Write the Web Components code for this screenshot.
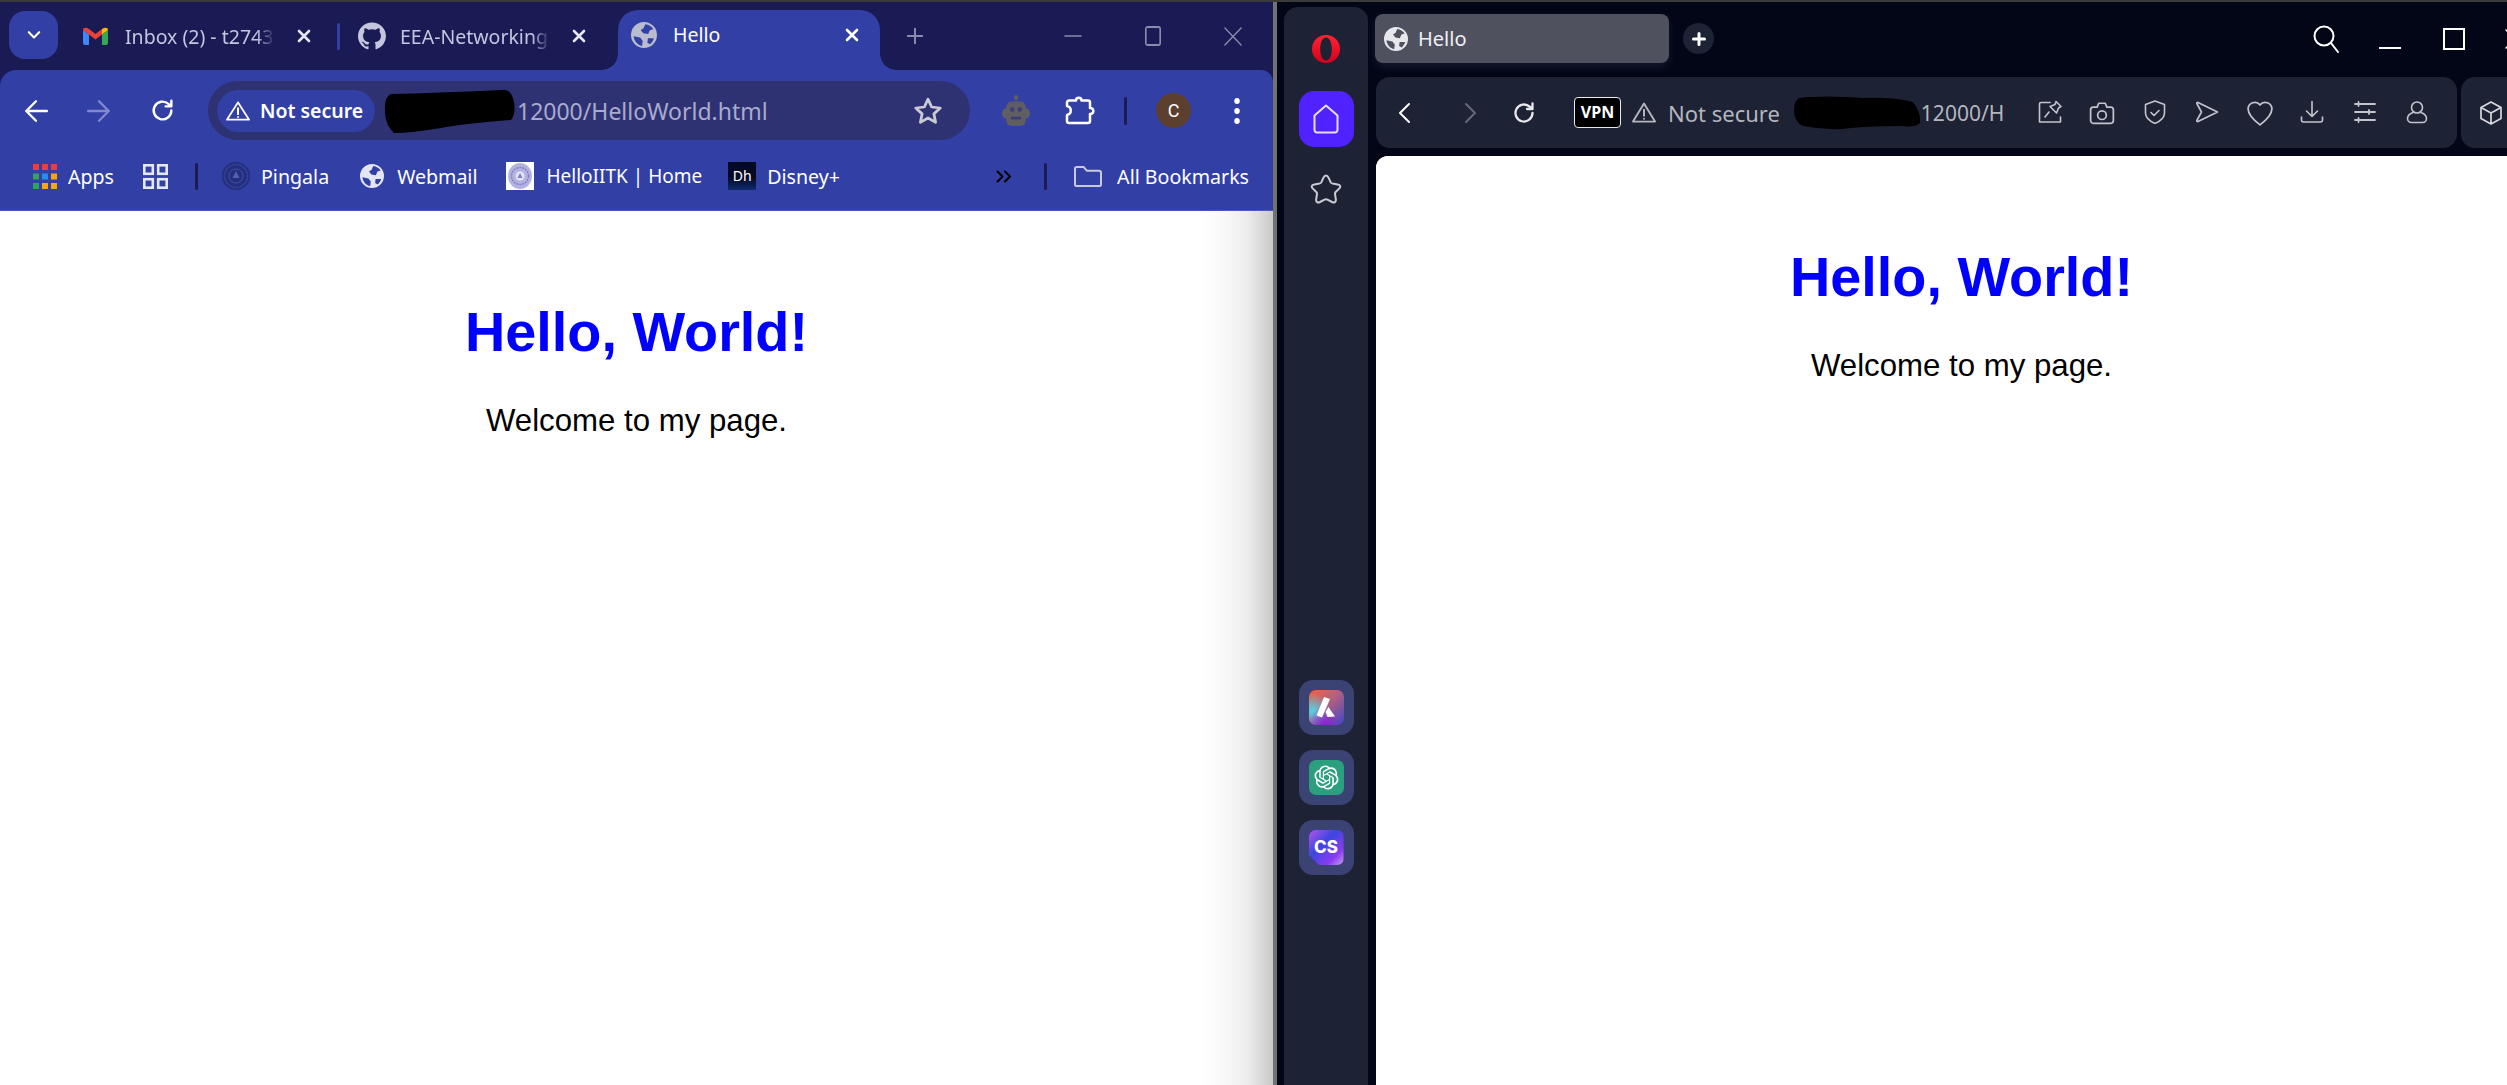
<!DOCTYPE html>
<html>
<head>
<meta charset="utf-8">
<title>Hello</title>
<style>
  html, body { margin: 0; height: 100%; overflow: hidden; background: #3a3a3a; }
  body { display: flex; flex-direction: column; padding-top: 2px; box-sizing: border-box; font-family: "Noto Sans", "Open Sans", sans-serif; }
  .desk { flex: 1; display: flex; min-height: 0; }
</style>
</head>
<body>
<div class="desk">
  <chrome-window></chrome-window>
  <opera-window></opera-window>
</div>
<script>
const S = 'fill="none" stroke="currentColor" stroke-linecap="round" stroke-linejoin="round"';
const ICONS = {
  chevron: ['0 0 20 20', `<path ${S} stroke-width="2.600" d="M3.500 6.500l6.500 6.500 6.500-6.500"/>`],
  gmail: ['0 0 25 18', `<path fill="#4285f4" d="M0 3v13a2 2 0 0 0 2 2h4V7.500L0 3z"/><path fill="#34a853" d="M19 18h4a2 2 0 0 0 2-2V3l-6 4.500V18z"/><path fill="#ea4335" d="M6 7.500l6.500 5 6.500-5V2l-6.500 5L6 2C3 0 0 .5 0 3l6 4.500z"/><path fill="#fbbc04" d="M19 2v5.500L25 3c0-2.500-3-3-6-1z"/>`],
  github: ['0 0 24 24.500', `<path fill="currentColor" d="M12 .5C5.37.5 0 5.87 0 12.5c0 5.3 3.44 9.8 8.2 11.39.6.11.82-.26.82-.58v-2.03c-3.34.73-4.04-1.61-4.04-1.61-.55-1.39-1.33-1.76-1.33-1.76-1.09-.74.08-.73.08-.73 1.2.08 1.84 1.24 1.84 1.24 1.07 1.83 2.81 1.3 3.49 1 .11-.78.42-1.31.76-1.61-2.67-.3-5.47-1.33-5.47-5.93 0-1.31.47-2.38 1.24-3.22-.13-.3-.54-1.52.12-3.18 0 0 1-.32 3.3 1.23a11.5 11.5 0 0 1 6 0c2.29-1.55 3.3-1.23 3.3-1.23.66 1.66.25 2.88.12 3.18.77.84 1.23 1.91 1.23 3.22 0 4.61-2.8 5.63-5.48 5.92.43.37.81 1.1.81 2.22v3.29c0 .32.22.7.83.58A12 12 0 0 0 24 12.500C24 5.87 18.63.5 12 .5z"/>`],
  globe: ['2 2 20 20', `<path fill="currentColor" fill-rule="evenodd" d="M12 2a10 10 0 1 0 0 20 10 10 0 1 0 0-20zM13 3.700c2.600.3 4.800 1.700 6.200 3.800l-2.700.8-1.300 3-3.700-.6-2-2.400 2.200-1.600zM4 13l5 1 2 2.500-.5 3.900C7 19.800 4.500 16.800 4 13zM15 14.500h4.600c-.5 1.900-1.600 3.500-3 4.600l-2-1.200z"/>`],
  close: ['0 0 16 16', `<path ${S} stroke-width="2.600" d="M3 3l10 10M13 3L3 13"/>`],
  plus: ['0 0 20 20', `<path ${S} stroke-width="2.200" d="M10 2v16M2 10h16"/>`],
  oplus: ['0 0 14 14', `<path ${S} stroke-width="3" d="M7 1.500v11M1.500 7h11"/>`],
  min: ['0 0 20 20', `<path ${S} stroke-width="1.500" d="M1 10h18"/>`],
  max: ['0 0 20 20', `<rect ${S} stroke-width="1.800" x="2" y="1" width="16" height="18" rx="2"/>`],
  x: ['0 0 20 20', `<path ${S} stroke-width="1.500" d="M1 1l18 18M19 1L1 19"/>`],
  back: ['0 0 24 24', `<path ${S} stroke-width="2.200" d="M22 12H3M12 3l-9 9 9 9"/>`],
  forward: ['0 0 24 24', `<path ${S} stroke-width="2.200" d="M2 12h19M12 3l9 9-9 9"/>`],
  reload: ['0 0 24 24', `<path ${S} stroke-width="2.300" d="M20.500 12a8.500 8.500 0 1 1-2.800-6.300L20.500 8M20.500 2.500V8H15"/>`],
  warn: ['0 0 24 22', `<path ${S} stroke-width="1.900" d="M12 1.500L23 20.500H1L12 1.500z"/><path ${S} stroke-width="2" d="M12 8v6.500M12 17.500v.1"/>`],
  star: ['0 0 24 24', `<path ${S} stroke-width="2.200" d="M12 2.500l2.900 6.300 6.900.8-5.100 4.700 1.400 6.800-6.100-3.500-6.100 3.500 1.400-6.800L2.200 9.600l6.900-.8z"/>`],
  robot: ['0 0 32 34', `<path fill="currentColor" d="M15 0h2v6h-2z"/><circle cx="16" cy="3" r="2.500" fill="currentColor"/><rect x="5" y="7" width="22" height="26" rx="6" fill="currentColor"/><rect x="0" y="14" width="32" height="11" rx="5" fill="currentColor"/><rect x="9.500" y="13" width="4.500" height="4.500" rx="1" fill="#3a3d78"/><rect x="18" y="13" width="4.500" height="4.500" rx="1" fill="#3a3d78"/><rect x="10" y="23" width="12" height="3" rx="1.500" fill="#3a3d78"/>`],
  puzzle: ['0 0 30 29', `<path ${S} stroke-width="2.500" d="M5 4.500h6C11 .8 16.500.8 16.500 4.500H23a2 2 0 0 1 2 2V12c4.500-.5 4.500 6.500 0 6v7a2 2 0 0 1-2 2H4a2 2 0 0 1-2-2v-6c5-1 5-8 0-9V6.500a2 2 0 0 1 2-2z"/>`],
  kebab: ['0 0 24 26', `<circle cx="12" cy="3" r="3" fill="currentColor"/><circle cx="12" cy="13" r="3" fill="currentColor"/><circle cx="12" cy="23" r="3" fill="currentColor"/>`],
  apps: ['0 0 24 25', [['#ea3d3d','#ea3d3d','#ea3d3d'],['#34a15c','#2a8ce8','#f5a712'],['#34a15c','#f5a712','#f5a712']].map((r, j) => r.map((c, i) => `<rect x="${i * 9}" y="${j * 9.500}" width="6" height="6" fill="${c}"/>`).join('')).join('')],
  grid: ['0 0 25 25', `<g fill="none" stroke="#e6e7f4" stroke-width="2.600"><rect x="1.300" y="1.300" width="8.500" height="8.500"/><rect x="15.200" y="1.300" width="8.500" height="8.500"/><rect x="1.300" y="15.200" width="8.500" height="8.500"/><rect x="15.200" y="15.200" width="8.500" height="8.500"/></g>`],
  seal: ['0 0 28 28', `<circle cx="14" cy="14" r="14" fill="#23307f"/><circle cx="14" cy="14" r="11.500" fill="none" stroke="#3e4aa0" stroke-width="1.500" stroke-dasharray="1.500 1"/><circle cx="14" cy="14" r="7" fill="none" stroke="#46529f" stroke-width="1"/><path fill="#5561ad" d="M14 9l3.500 7h-7z"/>`],
  sealwhite: ['0 0 28 28', `<rect width="28" height="28" fill="#fff"/><ellipse cx="14" cy="14" rx="12" ry="13" fill="#b3b3e2"/><circle cx="14" cy="14" r="8.500" fill="none" stroke="#8080c8" stroke-width="1.500" stroke-dasharray="2 1"/><circle cx="14" cy="14" r="4.500" fill="#e2e2f4"/><path fill="#8080c8" d="M14 11l2.500 5h-5z"/>`],
  folder: ['0 0 28 22', `<path fill="none" stroke="#c9cad6" stroke-width="2" stroke-linejoin="round" d="M1 3a2 2 0 0 1 2-2h6.500l3.500 4h12a2 2 0 0 1 2 2v12a2 2 0 0 1-2 2H3a2 2 0 0 1-2-2z"/>`],
  more: ['0 0 16 13', `<path ${S} stroke-width="2" d="M1.500 1.500l5 5-5 5M9 1.500l5 5-5 5"/>`],
  blobA: ['0 0 131 44', `<path d="M7 5Q50 4 118 1q9-2 12 12 2 12-3 18-50 4-70 8-30 5-47 5Q1 36 1 22 0 8 7 5z"/>`],
  blobB: ['0 0 128 34', `<path d="M6 2Q30-1 70 2q30-1 50 4 8 10 7 21-5 5-17 3-40 0-60 3-20 1-40-3Q1 26 1 14 1 5 6 2z"/>`],
  opera: ['0 0 28 28', `<defs><linearGradient id="og" x1="0" y1="0" x2="0" y2="1"><stop offset="0" stop-color="#ff2333"/><stop offset="1" stop-color="#d5001c"/></linearGradient></defs><path fill="url(#og)" fill-rule="evenodd" d="M14 0a14 14 0 1 0 0 28 14 14 0 1 0 0-28zm0 2.500c-3.500 0-5.800 5-5.800 11.500s2.300 11.500 5.800 11.500 5.800-5 5.800-11.500S17.500 2.500 14 2.500z"/>`],
  home: ['0 0 26 30', `<path ${S} stroke-width="2" d="M1.500 11.500L13 1.500l11.500 10V26a2.500 2.500 0 0 1-2.500 2.500H4A2.500 2.500 0 0 1 1.500 26z"/>`],
  ostar: ['0 0 32 30', `<path ${S} stroke-width="2" d="M16 1.500c1.500 0 2 1 2.800 2.600l1.900 4.300c.4.800 1 1 1.900 1.200l5 .8c3 .5 3.400 2.300 1.500 4.200l-3.400 3.400c-.6.600-.8 1.300-.7 2l.8 5.200c.4 3-1.400 4-3.800 2.800l-4.500-2.400c-1-.5-2-.5-3 0l-4.500 2.400c-2.400 1.200-4.200.2-3.800-2.800l.8-5.200c.1-.7-.1-1.400-.7-2l-3.400-3.400c-1.900-1.900-1.500-3.700 1.500-4.200l5-.8c.9-.2 1.500-.4 1.900-1.200l1.900-4.300C14 2.500 14.500 1.500 16 1.500z"/>`],
  left: ['0 0 20 24', `<path ${S} stroke-width="2" d="M14 3L5 12l9 9"/>`],
  right: ['0 0 20 24', `<path ${S} stroke-width="2" d="M6 3l9 9-9 9"/>`],
  note: ['0 0 24 24', `<path ${S} stroke-width="1.600" d="M12 2.500H3A1.500 1.500 0 0 0 1.500 4v18h21v-5"/><path ${S} stroke-width="1.600" d="M18 1.500l5 5-2.500 1.500-2 5-6.500-6.500 5-2zM11 12l-4 5"/>`],
  camera: ['0 0 24 24', `<path ${S} stroke-width="1.600" d="M1.500 9a2.500 2.500 0 0 1 2.500-2.500h3.500L9 3h6l1.500 3.500H20A2.500 2.500 0 0 1 22.500 9v10a2.500 2.500 0 0 1-2.500 2.500H4A2.500 2.500 0 0 1 1.500 19z"/><circle ${S} stroke-width="1.600" cx="12" cy="14" r="4"/>`],
  shield: ['0 0 24 24', `<path ${S} stroke-width="1.600" d="M12 1L21.500 4.500V13c0 5-4 8-9.500 10.500C6.500 21 2.500 18 2.500 13V4.500z"/><path ${S} stroke-width="1.600" d="M8 12.500l3 3 5-5"/>`],
  send: ['0 0 24 24', `<path ${S} stroke-width="1.600" d="M3 2.500c-.8-.3-1.500.3-1.200 1L6.500 12l-4.700 8.500c-.3.700.4 1.300 1.200 1L22.500 12z"/>`],
  heart: ['0 0 24 24', `<path ${S} stroke-width="1.600" d="M12 23C5 17.500 1 13 1 8a6.200 6.200 0 0 1 11-3.500A6.200 6.200 0 0 1 23 8c0 5-4 9.500-11 15z"/>`],
  download: ['0 0 24 24', `<path ${S} stroke-width="1.600" d="M12 1.500v15M6.500 11l5.500 5.500 5.500-5.500M1.500 17v3a2 2 0 0 0 2 2h17a2 2 0 0 0 2-2v-3"/>`],
  sliders: ['0 0 24 24', `<path ${S} stroke-width="1.800" d="M2 4h20M2 12h20M2 20h20M5.500 2v4M16 10v4M5.500 18v4"/>`],
  user: ['0 0 24 24', `<circle ${S} stroke-width="1.600" cx="12" cy="7.500" r="5.500"/><path ${S} stroke-width="1.600" d="M8 12.500C4 14 2.500 16.500 2.500 18.500a4 4 0 0 0 4 4h11a4 4 0 0 0 4-4c0-2-1.500-4.500-5.500-6"/>`],
  cube: ['0 0 24 24', `<path ${S} stroke-width="1.700" d="M12 1L22 6.500v11L12 23 2 17.500v-11zM2 6.500L12 12l10-5.500M12 12v11"/>`],
  search: ['0 0 26 28', `<circle ${S} stroke-width="2" cx="11" cy="11" r="9.500"/><path ${S} stroke-width="2" d="M18 18l7 9"/>`],
  omin: ['0 0 22 4', `<path fill="none" stroke="currentColor" stroke-width="2" d="M0 2h22"/>`],
  omax: ['0 0 22 22', `<rect x="1" y="1" width="20" height="20" fill="none" stroke="currentColor" stroke-width="2"/>`],
  aria: ['0 0 35 35', `<defs><linearGradient id="a1" x1="0" y1="0" x2="1" y2="1"><stop offset="0" stop-color="#f0663a"/><stop offset=".45" stop-color="#b8607c"/><stop offset="1" stop-color="#3d48c8"/></linearGradient><radialGradient id="a2" cx=".1" cy=".6" r=".5"><stop offset="0" stop-color="#52d4e8"/><stop offset="1" stop-color="#52d4e8" stop-opacity="0"/></radialGradient><radialGradient id="a3" cx=".45" cy="1" r=".5"><stop offset="0" stop-color="#8a1fd6"/><stop offset="1" stop-color="#8a1fd6" stop-opacity="0"/></radialGradient></defs><rect width="35" height="35" rx="7" fill="url(#a1)"/><rect width="35" height="35" rx="7" fill="url(#a2)"/><rect width="35" height="35" rx="7" fill="url(#a3)"/><path fill="#fff" d="M15 7l6 2-8 18.500-5.500-2zM19.500 17l6.500 9.500-7.500.5-2-5z"/>`],
  gpt: ['0 0 35 35', `<rect width="35" height="35" rx="7" fill="#2b9f7e"/><g transform="translate(5.500 5.500)"><path fill="#fff" d="M22.2819 9.8211a5.9847 5.9847 0 0 0-.5157-4.9108 6.0462 6.0462 0 0 0-6.5098-2.9A6.0651 6.0651 0 0 0 4.9807 4.1818a5.9847 5.9847 0 0 0-3.9977 2.9 6.0462 6.0462 0 0 0 .7427 7.0966 5.98 5.98 0 0 0 .511 4.9107 6.051 6.051 0 0 0 6.5146 2.9001A5.9847 5.9847 0 0 0 13.2599 24a6.0557 6.0557 0 0 0 5.7718-4.2058 5.9894 5.9894 0 0 0 3.9977-2.9001 6.0557 6.0557 0 0 0-.7475-7.0729zm-9.022 12.6081a4.4755 4.4755 0 0 1-2.8764-1.0408l.1419-.0804 4.7783-2.7582a.7948.7948 0 0 0 .3927-.6813v-6.7369l2.02 1.1686a.071.071 0 0 1 .038.052v5.5826a4.504 4.504 0 0 1-4.4945 4.4944zm-9.6607-4.1254a4.4708 4.4708 0 0 1-.5346-3.0137l.142.0852 4.783 2.7582a.7712.7712 0 0 0 .7806 0l5.8428-3.3685v2.3324a.0804.0804 0 0 1-.0332.0615L9.74 19.9502a4.4992 4.4992 0 0 1-6.1408-1.6464zM2.3408 7.8956a4.485 4.485 0 0 1 2.3655-1.9728V11.6a.7664.7664 0 0 0 .3879.6765l5.8144 3.3543-2.0201 1.1685a.0757.0757 0 0 1-.071 0l-4.8303-2.7865A4.504 4.504 0 0 1 2.3408 7.872zm16.5963 3.8558L13.1038 8.364 15.1192 7.2a.0757.0757 0 0 1 .071 0l4.8303 2.7913a4.4944 4.4944 0 0 1-.6765 8.1042v-5.6772a.79.79 0 0 0-.407-.667zm2.0107-3.0231l-.142-.0852-4.7735-2.7818a.7759.7759 0 0 0-.7854 0L9.409 9.2297V6.8974a.0662.0662 0 0 1 .0284-.0615l4.8303-2.7866a4.4992 4.4992 0 0 1 6.6802 4.66zM8.3065 12.863l-2.02-1.1638a.0804.0804 0 0 1-.038-.0567V6.0742a4.4992 4.4992 0 0 1 7.3757-3.4537l-.142.0805L8.704 5.459a.7948.7948 0 0 0-.3927.6813zm1.0976-2.3654l2.602-1.4998 2.6069 1.4998v2.9994l-2.5974 1.4997-2.6067-1.4997Z"/></g>`],
};

class AppIcon extends HTMLElement {
  connectedCallback() {
    if (this.shadowRoot) return;
    const [box, body] = ICONS[this.getAttribute('name')];
    const w = this.getAttribute('w');
    const h = this.getAttribute('h') || w;
    this.attachShadow({ mode: 'open' }).innerHTML = `
      <style>:host { display: block; flex: none; width: ${w}px; height: ${h}px; } svg { display: block; width: 100%; height: 100%; }</style>
      <svg viewBox="${box}" preserveAspectRatio="none">${body}</svg>`;
  }
}

class ChromeTab extends HTMLElement {
  constructor() {
    super();
    this.attachShadow({ mode: 'open' }).innerHTML = `
      <style>
        :host { display: flex; align-items: center; flex: none; height: 48px; color: #c4c6de; font-size: 19.500px; }
        :host([active]) { position: relative; width: 262px; height: 60px; box-sizing: border-box; padding: 0 16px 11px 13px; margin-top: auto; background: #323fa5; border-radius: 20px 20px 0 0; color: #fff; }
        :host([active])::before, :host([active])::after { content: ""; position: absolute; bottom: 0; width: 16px; height: 16px; }
        :host([active])::before { right: 100%; background: radial-gradient(circle at 0 0, transparent 15.500px, #323fa5 16px); }
        :host([active])::after { left: 100%; background: radial-gradient(circle at 100% 0, transparent 15.500px, #323fa5 16px); }
        .label { width: 150px; margin: 0 21px 0 var(--gap, 17px); overflow: hidden; white-space: nowrap; -webkit-mask-image: linear-gradient(to right, #000 88%, transparent); mask-image: linear-gradient(to right, #000 88%, transparent); }
        :host([active]) .label { -webkit-mask-image: none; mask-image: none; margin: 0 0 0 16px; }
        .close { margin-left: auto; color: #e6e7f2; }
        :host([active]) .close { color: #fff; }
      </style>
      <slot name="icon"></slot>
      <div class="label"><slot></slot></div>
      <app-icon class="close" name="close" w="16" style="margin-right:4px"></app-icon>`;
  }
}

class BookmarkItem extends HTMLElement {
  constructor() {
    super();
    this.attachShadow({ mode: 'open' }).innerHTML = `
      <style>
        :host { display: flex; align-items: center; flex: none; gap: 11px; color: #fff; font-size: 19.600px; white-space: nowrap; }
      </style>
      <slot name="icon"></slot>
      <slot></slot>`;
  }
}

class HelloPage extends HTMLElement {
  constructor() {
    super();
    this.attachShadow({ mode: 'open' }).innerHTML = `
      <style>
        :host { display: block; background: #fff; color: #000; text-align: center; font-family: "Liberation Sans", Arial, sans-serif; padding-top: 89px; }
        h1 { margin: 0 0 41px; font-size: 55.800px; line-height: 64px; font-weight: 700; color: #00f; }
        p { margin: 0; font-size: 31.200px; line-height: 32px; }
      </style>
      <h1>Hello, World!</h1>
      <p>Welcome to my page.</p>`;
  }
}

class ChromeWindow extends HTMLElement {
  constructor() {
    super();
    this.attachShadow({ mode: 'open' }).innerHTML = `
      <style>
        :host { display: flex; flex-direction: column; flex: none; width: 1273px; background: #1a1a55; }
        .strip { display: flex; align-items: center; height: 68px; padding-left: 9px; color: #fff; }
        .drop { display: grid; place-items: center; flex: none; width: 49px; height: 48px; margin: 0 0 2px; background: #323fa5; border-radius: 16px; color: #fff; }
        .sep { flex: none; width: 3px; border-radius: 2px; }
        .strip .sep { height: 27px; background: #323fa5; margin: 0 18px 0 21px; }
        .winbtn { display: grid; place-items: center; width: 80px; color: #8b8cab; }
        .tools { background: #323fa5; border-radius: 16px 12px 0 0; }
        .nav { display: flex; align-items: center; height: 59px; padding: 11px 0 2px 23px; color: #fff; }
        .pill { display: flex; align-items: center; flex: none; width: 762px; height: 59px; box-sizing: border-box; margin-left: 33.500px; padding-left: 9px; background: #2e3272; border-radius: 30px; color: #a9abcf; font-size: 23px; }
        .chip { display: flex; align-items: center; gap: 10px; width: 158px; height: 42px; box-sizing: border-box; padding-left: 9px; background: #323fa5; border-radius: 21px; color: #fff; font-size: 19.500px; font-weight: 600; white-space: nowrap; }
        .avatar { display: grid; place-items: center; flex: none; width: 35px; height: 35px; border-radius: 50%; background: #5d3f30; color: #fff; font: 18px Roboto, sans-serif; }
        .marks { display: flex; align-items: center; height: 68px; padding: 0 24px 0 33px; border-bottom: 1px solid #4c58c2; }
        .marks .sep { height: 27px; background: #1a1a55; }
        .disney { display: grid; place-items: center; width: 28px; height: 28px; background: linear-gradient(#050a24 55%, #0f2a6e); color: #fff; font-size: 14px; line-height: 28px; }
        .body { position: relative; flex: 1; background: #fff; }
        .body::after { content: ""; position: absolute; top: 0; right: 0; bottom: 0; width: 75px; background: linear-gradient(to right, rgba(0,0,0,0), rgba(0,0,0,.02) 30%, rgba(0,0,0,.07) 65%, rgba(0,0,0,.21)); }
      </style>
      <div class="strip">
        <div class="drop"><app-icon name="chevron" w="16"></app-icon></div>
        <chrome-tab style="margin-left:25px"><app-icon slot="icon" name="gmail" w="25" h="18"></app-icon>Inbox (2) - t2743</chrome-tab>
        <div class="sep"></div>
        <chrome-tab style="--gap:14px"><app-icon slot="icon" name="github" w="28"></app-icon>EEA-Networking</chrome-tab>
        <chrome-tab active style="margin-left:27px"><app-icon slot="icon" name="globe" w="26" style="color:#b9bbcf"></app-icon>Hello</chrome-tab>
        <app-icon name="plus" w="18" style="margin-left:26px;color:#8b8cab"></app-icon>
        <div style="display:flex;margin-left:auto">
          <div class="winbtn"><app-icon name="min" w="18"></app-icon></div>
          <div class="winbtn"><app-icon name="max" w="18" h="20"></app-icon></div>
          <div class="winbtn"><app-icon name="x" w="18" h="19"></app-icon></div>
        </div>
      </div>
      <div class="tools">
        <div class="nav">
          <app-icon name="back" w="26"></app-icon>
          <app-icon name="forward" w="26" style="margin-left:37px;color:#8089cc"></app-icon>
          <app-icon name="reload" w="25" style="margin-left:37.500px"></app-icon>
          <div class="pill">
            <div class="chip"><app-icon name="warn" w="24" h="20"></app-icon>Not secure</div>
            <app-icon name="blobA" w="131" h="44" style="margin-left:9px;color:#000"></app-icon>
            <span style="margin-left:2px">12000/HelloWorld.html</span>
            <app-icon name="star" w="30" style="margin:0 27px 0 auto;color:#c9cad6"></app-icon>
          </div>
          <app-icon name="robot" w="28" h="32" style="margin-left:32px;color:#5f5f63"></app-icon>
          <app-icon name="puzzle" w="30" h="29" style="margin-left:35px"></app-icon>
          <div class="sep" style="height:28px;background:#1a1a55;margin:0 29px"></div>
          <div class="avatar">C</div>
          <app-icon name="kebab" w="22" h="26" style="margin-left:35px"></app-icon>
        </div>
        <div class="marks">
          <bookmark-item><app-icon slot="icon" name="apps" w="24" h="25"></app-icon>Apps</bookmark-item>
          <app-icon name="grid" w="25" style="margin-left:29px"></app-icon>
          <div class="sep" style="margin:0 24px 0 27px"></div>
          <bookmark-item><app-icon slot="icon" name="seal" w="28"></app-icon>Pingala</bookmark-item>
          <bookmark-item style="margin-left:31px;gap:13px"><app-icon slot="icon" name="globe" w="24" style="color:#e4e5f2"></app-icon>Webmail</bookmark-item>
          <bookmark-item style="margin-left:29px;gap:12px;font-size:19px"><app-icon slot="icon" name="sealwhite" w="28"></app-icon>HelloIITK | Home</bookmark-item>
          <bookmark-item style="margin-left:26px"><div slot="icon" class="disney">Dh</div>Disney+</bookmark-item>
          <app-icon name="more" w="16" h="13" style="margin-left:auto"></app-icon>
          <div class="sep" style="margin:0 27px 0 32px"></div>
          <bookmark-item style="gap:15px"><app-icon slot="icon" name="folder" w="28" h="21"></app-icon>All Bookmarks</bookmark-item>
        </div>
      </div>
      <div class="body"><hello-page></hello-page></div>`;
  }
}

class OperaWindow extends HTMLElement {
  constructor() {
    super();
    this.attachShadow({ mode: 'open' }).innerHTML = `
      <style>
        :host { display: flex; flex: 1; min-width: 0; overflow: hidden; background: #020617; border-left: 4px solid #727272; padding-left: 7px; }
        .side { display: flex; flex-direction: column; align-items: center; flex: none; width: 84px; box-sizing: border-box; margin-top: 5px; padding: 28px 0 210px; background: #1e2235; border-radius: 14px 14px 0 0; color: #c9cbd4; }
        .home { display: grid; place-items: center; flex: none; width: 55px; height: 56px; margin: 28px 0 27px; background: #4f22ff; border-radius: 15px; color: #e6e0ff; }
        .app { display: grid; place-items: center; flex: none; width: 55px; height: 55px; margin-top: 15px; background: #3a4373; border-radius: 14px; }
        .cs { position: relative; width: 35px; height: 35px; border-radius: 7px 7px 7px 12px; background: linear-gradient(135deg, #b455e8, #3c45e0 40%, #8a3cf0 75%, #c8a0f4); color: #fff; font: 800 17px/35px Inter, sans-serif; text-align: center; clip-path: polygon(0 0, 100% 0, 100% 100%, 30% 100%, 0 70%); }
        .main { display: flex; flex-direction: column; flex: none; width: 1172px; margin-left: 7px; }
        .top { display: flex; align-items: center; flex: none; height: 49px; margin-top: 12px; color: #fff; }
        .tab { display: flex; align-items: center; flex: none; gap: 10px; width: 294px; height: 49px; box-sizing: border-box; padding-left: 9px; background: #4f515e; border-radius: 8px; box-shadow: 0 4px 10px rgba(120,125,150,.16); font-size: 20px; color: #eef0f4; }
        .new { display: grid; place-items: center; flex: none; width: 31px; height: 31px; margin-left: 14px; border-radius: 50%; background: #1e2235; }
        .bars { display: flex; gap: 4px; flex: none; height: 71px; margin: 14px 0 8px 1px; }
        .bar { display: flex; align-items: center; box-sizing: border-box; background: #1e2235; border-radius: 14px; color: #fff; }
        .vpn { flex: none; width: 47px; height: 31px; box-sizing: border-box; margin-left: 38px; border: 1.500px solid #e8e8ee; border-radius: 4px; background: #000; color: #fff; font: 700 16px/28px "Noto Sans", sans-serif; text-align: center; }
        .dim { color: #b4b6bf; font-size: 22px; white-space: nowrap; }
        .tools { display: grid; grid-template-columns: repeat(8, 26px); gap: 26.500px; justify-items: center; margin-left: auto; padding-right: 27px; color: #c3c5ce; }
        .page { flex: 1; margin-left: 1px; background: #fff; border-radius: 12px 0 0 0; overflow: hidden; }
      </style>
      <div class="side">
        <app-icon name="opera" w="28"></app-icon>
        <div class="home"><app-icon name="home" w="26" h="30"></app-icon></div>
        <app-icon name="ostar" w="32" h="30"></app-icon>
        <div style="margin-top:auto"></div>
        <div class="app" style="margin-top:0"><app-icon name="aria" w="35"></app-icon></div>
        <div class="app"><app-icon name="gpt" w="35"></app-icon></div>
        <div class="app"><div class="cs">CS</div></div>
      </div>
      <div class="main">
        <div class="top">
          <div class="tab"><app-icon name="globe" w="24" style="color:#e6e8ee"></app-icon>Hello</div>
          <div class="new"><app-icon name="oplus" w="14"></app-icon></div>
          <app-icon name="search" w="26" h="28" style="margin-left:599px"></app-icon>
          <app-icon name="omin" w="22" h="4" style="margin:18px 0 0 40px"></app-icon>
          <app-icon name="omax" w="22" style="margin-left:42px"></app-icon>
          <app-icon name="x" w="20" style="margin-left:40px"></app-icon>
        </div>
        <div class="bars">
          <div class="bar" style="width:1081px;padding-left:19px">
            <app-icon name="left" w="20" h="24"></app-icon>
            <app-icon name="right" w="20" h="24" style="margin-left:45px;color:#666a78"></app-icon>
            <app-icon name="reload" w="24" style="margin-left:32px;color:#e8e9ee"></app-icon>
            <div class="vpn">VPN</div>
            <app-icon name="warn" w="24" h="21" style="margin-left:11px;color:#b4b6bf"></app-icon>
            <span class="dim" style="margin-left:12px">Not secure</span>
            <app-icon name="blobB" w="128" h="34" style="margin-left:13px;color:#000"></app-icon>
            <span class="dim" style="font-size:21px">12000/H</span>
            <div class="tools">
              <app-icon name="note" w="24"></app-icon>
              <app-icon name="camera" w="26"></app-icon>
              <app-icon name="shield" w="24"></app-icon>
              <app-icon name="send" w="24"></app-icon>
              <app-icon name="heart" w="26"></app-icon>
              <app-icon name="download" w="24"></app-icon>
              <app-icon name="sliders" w="24"></app-icon>
              <app-icon name="user" w="24"></app-icon>
            </div>
          </div>
          <div class="bar" style="flex:1;padding-left:18px;color:#d6d7de">
            <app-icon name="cube" w="24"></app-icon>
          </div>
        </div>
        <div class="page"><hello-page></hello-page></div>
      </div>`;
  }
}

customElements.define('app-icon', AppIcon);
customElements.define('chrome-tab', ChromeTab);
customElements.define('bookmark-item', BookmarkItem);
customElements.define('hello-page', HelloPage);
customElements.define('chrome-window', ChromeWindow);
customElements.define('opera-window', OperaWindow);
</script>
</body>
</html>
